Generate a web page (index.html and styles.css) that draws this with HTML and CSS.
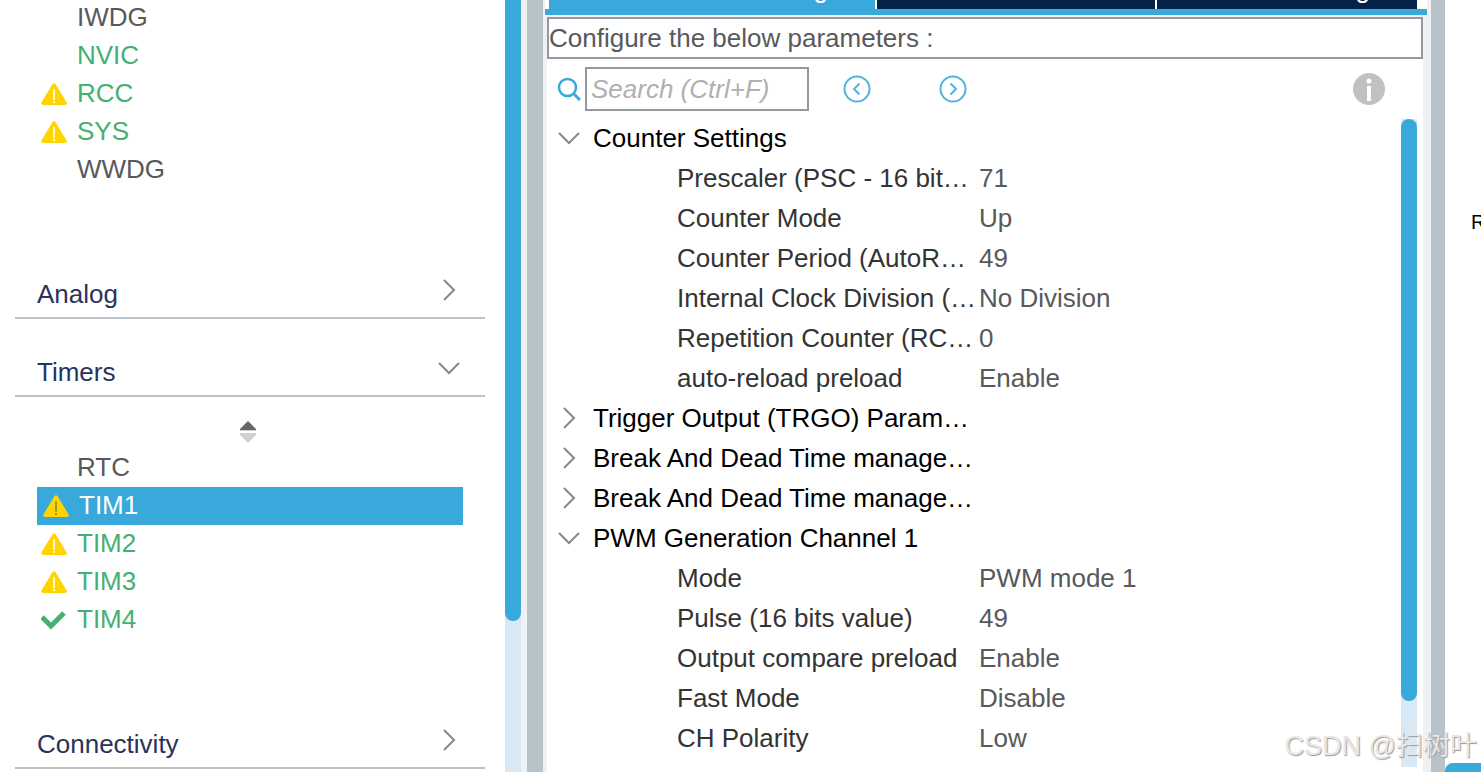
FILE: index.html
```html
<!DOCTYPE html>
<html lang="en">
<head>
<meta charset="utf-8">
<title>Pinout &amp; Configuration</title>
<link rel="stylesheet" href="styles.css">
</head>
<body>
<svg class="symbols" aria-hidden="true">
  <symbol id="warn" viewBox="0 0 26 22">
    <path d="M11.4 1.2Q13-.8 14.6 1.2L25.6 19.4Q26.400 22 24 22H2Q-.4 22 .4 19.400Z" fill="#ffd400"/>
    <path d="M13 6V17M13 18V20" stroke="currentColor" stroke-width="1.600"/>
  </symbol>
  <symbol id="right" viewBox="0 0 22 22"><path d="M6 1L16 11L6 21" fill="none" stroke="#888" stroke-width="2"/></symbol>
  <symbol id="down" viewBox="0 0 22 22"><path d="M1 6L11 16L21 6" fill="none" stroke="#888" stroke-width="2"/></symbol>
</svg>
<div class="app">
  <nav class="sidebar">
    <div class="categories">
      <ul class="ip-list">
        <li>IWDG</li>
        <li class="used">NVIC</li>
        <li class="used"><svg class="state"><use href="#warn"/></svg>RCC</li>
        <li class="used"><svg class="state"><use href="#warn"/></svg>SYS</li>
        <li>WWDG</li>
      </ul>
      <button class="category">Analog <svg class="chevron"><use href="#right"/></svg></button>
      <button class="category">Timers <svg class="chevron"><use href="#down"/></svg></button>
      <button class="sort" aria-label="Sort">
        <svg viewBox="0 0 18 22"><path d="M9 0L17 8V9H1V8Z" fill="#666"/><path d="M1 9H17V10H1Z" fill="#ccc"/><path d="M1 12H17V14L9 22L1 14Z" fill="#d0d0d0"/></svg>
      </button>
      <ul class="ip-list">
        <li>RTC</li>
        <li class="selected"><svg class="state"><use href="#warn"/></svg>TIM1</li>
        <li class="used"><svg class="state"><use href="#warn"/></svg>TIM2</li>
        <li class="used"><svg class="state"><use href="#warn"/></svg>TIM3</li>
        <li class="used"><svg class="state" viewBox="0 0 26 22"><path d="M1 8L10 17L23 4" fill="none" stroke="#45b072" stroke-width="5"/></svg>TIM4</li>
      </ul>
      <button class="category">Connectivity <svg class="chevron"><use href="#right"/></svg></button>
    </div>
    <div class="scrollbar"><div class="thumb thumb-sidebar"></div></div>
  </nav>
  <div class="splitter splitter-left"></div>

  <main class="config">
    <div class="tabs">
      <button class="tab active">Parameter Settings</button>
      <button class="tab">User Constants</button>
      <button class="tab">NVIC Settings</button>
    </div>
    <div class="config-body">
      <div class="hint">Configure the below parameters :</div>
      <div class="search-row">
        <label class="search-label" for="search" aria-label="Search">
          <svg viewBox="0 0 24 24"><circle cx="10.500" cy="10.500" r="8.500" fill="none" stroke="#39a9dc" stroke-width="2.500"/><path d="M16.500 16.500L23 23" stroke="#39a9dc" stroke-width="3"/></svg>
        </label>
        <input id="search" class="search" type="text" placeholder="Search (Ctrl+F)">
        <button class="step" aria-label="Previous">
          <svg viewBox="0 0 28 28"><circle cx="14" cy="14" r="12.500"/><path d="M16.500 8.500L11 14L16.500 19.500"/></svg>
        </button>
        <button class="step step-next" aria-label="Next">
          <svg viewBox="0 0 28 28"><circle cx="14" cy="14" r="12.500"/><path d="M11.500 8.500L17 14L11.500 19.500"/></svg>
        </button>
        <button class="info" aria-label="Info">
          <svg viewBox="0 0 32 32"><circle cx="16" cy="16" r="16" fill="#c1c1c1"/><circle cx="16" cy="8" r="2.500" fill="#fff"/><path d="M16 13V28" stroke="#fff" stroke-width="4"/></svg>
        </button>
      </div>
      <div class="params-pane">
        <table class="params">
          <colgroup><col class="col-arrow"><col class="col-indent"><col class="col-name"><col></colgroup>
          <tbody>
            <tr class="group"><td><svg class="chevron"><use href="#down"/></svg></td><th colspan="3">Counter Settings</th></tr>
            <tr><td colspan="2"></td><th>Prescaler (PSC - 16 bit…</th><td>71</td></tr>
            <tr><td colspan="2"></td><th>Counter Mode</th><td>Up</td></tr>
            <tr><td colspan="2"></td><th>Counter Period (AutoR…</th><td>49</td></tr>
            <tr><td colspan="2"></td><th>Internal Clock Division (…</th><td>No Division</td></tr>
            <tr><td colspan="2"></td><th>Repetition Counter (RC…</th><td>0</td></tr>
            <tr><td colspan="2"></td><th>auto-reload preload</th><td>Enable</td></tr>
          </tbody>
          <tbody>
            <tr class="group"><td><svg class="chevron"><use href="#right"/></svg></td><th colspan="3">Trigger Output (TRGO) Param…</th></tr>
            <tr class="group"><td><svg class="chevron"><use href="#right"/></svg></td><th colspan="3">Break And Dead Time manage…</th></tr>
            <tr class="group"><td><svg class="chevron"><use href="#right"/></svg></td><th colspan="3">Break And Dead Time manage…</th></tr>
          </tbody>
          <tbody>
            <tr class="group"><td><svg class="chevron"><use href="#down"/></svg></td><th colspan="3">PWM Generation Channel 1</th></tr>
            <tr><td colspan="2"></td><th>Mode</th><td>PWM mode 1</td></tr>
            <tr><td colspan="2"></td><th>Pulse (16 bits value)</th><td>49</td></tr>
            <tr><td colspan="2"></td><th>Output compare preload</th><td>Enable</td></tr>
            <tr><td colspan="2"></td><th>Fast Mode</th><td>Disable</td></tr>
            <tr><td colspan="2"></td><th>CH Polarity</th><td>Low</td></tr>
          </tbody>
        </table>
        <div class="scrollbar"><div class="thumb thumb-params"></div></div>
      </div>
    </div>
  </main>
  <div class="splitter splitter-right"></div>

  <aside class="pinout">
    <span class="pin-label">R</span>
    <div class="pinout-bar"></div>
  </aside>
</div>
<div class="watermark">CSDN @扫树叶</div>
</body>
</html>
```
FILE: styles.css
```css
* { box-sizing: border-box; }
body { margin: 0; overflow: hidden; background: #fff; color: #58595b; font: 26px/38px "Liberation Sans", Arial, sans-serif; }
button { border: none; padding: 0; background: none; font: inherit; color: inherit; cursor: pointer; }
svg { display: block; flex: none; }
.symbols { position: absolute; width: 0; height: 0; }
.app { display: flex; height: 100vh; overflow: hidden; }

/* IP tree */
.sidebar { flex: none; width: 521px; display: flex; }
.categories { flex: 1; padding: 0 20px 0 15px; margin-top: -1px; }
.ip-list { list-style: none; margin: 0 22px 52px; padding: 0; line-height: 36px; }
.ip-list li { position: relative; height: 38px; padding-left: 40px; }
.ip-list .used { color: #45b072; }
.ip-list .selected { background: #39a9dc; color: #fff; padding-left: 42px; }
.state { position: absolute; left: 4px; top: 8px; width: 26px; height: 22px; color: #fff; }
.selected .state { left: 6px; color: #7d8a45; }
.category { display: flex; justify-content: space-between; align-items: flex-end; width: 100%; height: 78px; padding: 0 25px 4px 22px; border-bottom: 2px solid #b7c3c9; color: #29335c; text-align: left; }
.category .chevron { margin-bottom: 12px; }
.chevron { width: 22px; height: 22px; }
.sort { display: block; margin: 24px auto 6px; padding-right: 4px; }
.sort svg { width: 18px; height: 22px; }

.scrollbar { flex: none; width: 16px; background: #d9e8f5; }
.thumb { background: #39a9dc; border-radius: 8px; }
.thumb-sidebar { height: 621px; border-radius: 0 0 8px 8px; }
.thumb-params { height: 582px; }

.splitter { flex: none; background: #b7c3c9; }
.splitter-left { width: 26px; border: solid #f0f1f4; border-width: 0 4px 0 6px; }
.splitter-right { width: 22px; border-left: 8px solid #f0f1f4; }

/* Parameter settings */
.config { flex: 1; min-width: 0; display: flex; flex-direction: column; }
.tabs { position: relative; display: grid; grid-template-columns: 326fr 278fr 260fr; gap: 2px; height: 15px; margin: 0 -4px 0 -2px; padding: 0 10px 0 4px; background: #fff; border-bottom: 6px solid #39a9dc; }
.tab { display: flex; justify-content: flex-end; align-items: flex-end; height: 9px; padding: 0 34px 7px 0; overflow: hidden; background: #03234b; color: #fff; line-height: 26px; white-space: nowrap; }
.tab.active { background: #39a9dc; }
.config-body { flex: 1; border-top: 2px solid #f0f1f4; display: flex; flex-direction: column; }
.hint { height: 42px; border: 2px solid #92999f; }
.search-row { display: flex; align-items: center; height: 60px; padding: 0 38px 0 10px; }
.search-label svg { width: 24px; height: 24px; }
.search { width: 224px; height: 44px; margin-left: 4px; padding: 0 4px; border: 2px solid #92999f; border-radius: 0; font: italic 26px "Liberation Sans", Arial, sans-serif; outline: none; }
.search::placeholder { color: #b0b0b0; opacity: 1; }
.step { margin-left: 34px; }
.step-next { margin-left: 68px; }
.step svg { width: 28px; height: 28px; fill: none; stroke: #4fb3e0; stroke-width: 2; }
.info { margin-left: auto; }
.info svg { width: 32px; height: 32px; }
.params-pane { flex: 1; display: flex; padding: 0 6px 5px 0; }
.params { flex: 1; align-self: flex-start; width: 100%; table-layout: fixed; border-collapse: collapse; margin-top: -1px; }
.params tr { height: 40px; }
.params th, .params td { padding: 0; text-align: left; font-weight: normal; white-space: nowrap; }
.params th { color: #333; }
.params .group th { color: #000; }
.params .chevron { margin-left: 11px; }
.col-arrow { width: 46px; }
.col-indent { width: 84px; }
.col-name { width: 302px; }

.pinout { flex: none; position: relative; width: 36px; overflow: hidden; }
.pin-label { position: absolute; left: 26px; top: 211px; color: #000; font-size: 20px; line-height: 22px; }
.pinout-bar { position: absolute; left: 0; right: 0; bottom: 0; height: 9px; background: #39a9dc; border-top-left-radius: 8px; }

.watermark { position: absolute; right: 4px; bottom: 7px; color: #e8e8e8; font-family: "Liberation Sans", "Noto Sans CJK SC", sans-serif; font-size: 27px; text-shadow: 1px 1px 1px #999; white-space: nowrap; }
```
